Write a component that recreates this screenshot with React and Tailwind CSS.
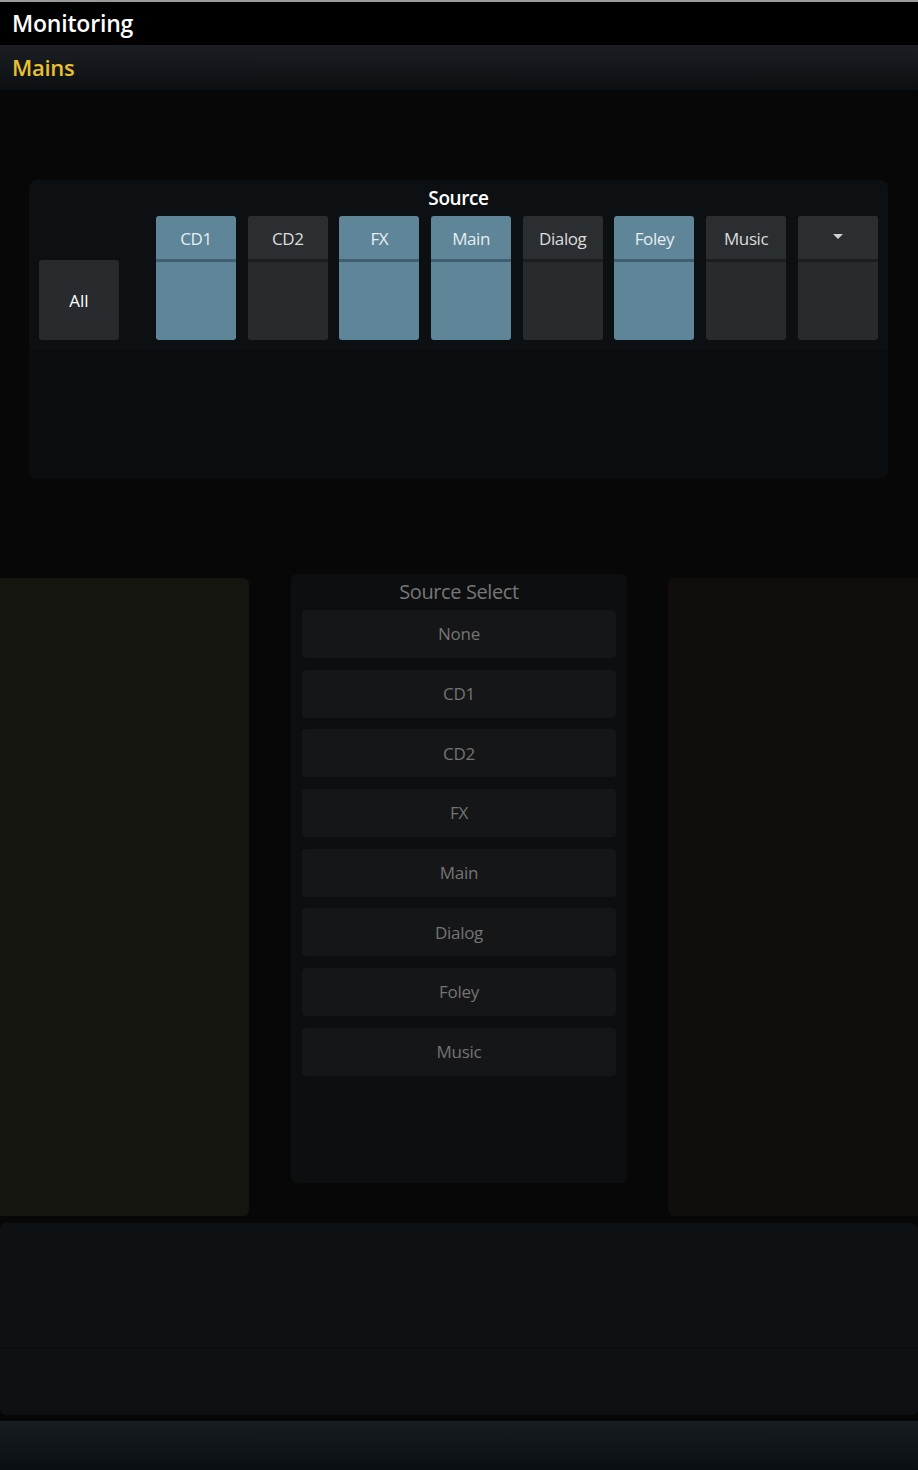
import { useState } from 'react';

const channels = [
    { name: 'CD1', on: true },
    { name: 'CD2', on: false },
    { name: 'FX', on: true },
    { name: 'Main', on: true },
    { name: 'Dialog', on: false },
    { name: 'Foley', on: true },
    { name: 'Music', on: false },
];

const sources = ['None', 'CD1', 'CD2', 'FX', 'Main', 'Dialog', 'Foley', 'Music'];

function ChannelButton({ label, on, onClick, children }) {
    return (
        <button
            onClick={onClick}
            className={`flex flex-col w-[80px] h-[124px] rounded-[3px] overflow-hidden ${on ? 'bg-[#5f8599]' : 'bg-[#272b2e]'}`}
        >
            <div className={`h-[43px] w-full flex items-center justify-center pt-[3px] text-[17px] tracking-[-0.4px] ${on ? 'text-[#e6eef2]' : 'text-[#dcdcdc] bg-[#2a2e31]'}`}>
                {children || label}
            </div>
            <div className={`h-[3px] w-full ${on ? 'bg-[#3f5f70]' : 'bg-[#1b1e21]'}`} />
            <div className="flex-1 w-full" />
        </button>
    );
}

export default function App() {
    const [active, setActive] = useState(channels.map(c => c.on));

    const toggle = (i) => {
        setActive(active.map((v, j) => (j === i ? !v : v)));
    };

    return (
        <div className="w-[918px] h-[1470px] bg-[#070707] flex flex-col overflow-hidden" style={{ fontFamily: '"Open Sans", "Noto Sans", sans-serif' }}>
            <div className="h-[2px] bg-[#9a9a9a]" />

            {/* title bar */}
            <div className="h-[43px] bg-black flex items-center px-3">
                <span className="text-white text-[23px] font-semibold tracking-[-0.2px]">Monitoring</span>
            </div>

            <div className="h-[45px] bg-gradient-to-b from-[#1b1f23] to-[#0c0f12] flex items-center px-3">
                <span className="text-[#e9c12e] text-[22px] font-semibold tracking-[-0.3px]">Mains</span>
            </div>

            {/* source panel */}
            <div className="pt-[90px] pl-[29px] pr-[30px]">
                <div className="h-[299px] bg-[#0d1013] rounded-lg flex flex-col">
                    <div className="h-[36px] flex items-center justify-center text-white text-[19px] font-semibold tracking-[-0.4px]">
                        Source
                    </div>
                    <div className="flex items-end px-[10px]">
                        <button className="w-[80px] h-[80px] bg-[#272b2e] rounded-[3px] text-white text-[17px] pt-[2px] mr-[37px]">
                            All
                        </button>
                        <div className="flex gap-[11.7px]">
                            {channels.map((c, i) => (
                                <ChannelButton key={c.name} label={c.name} on={active[i]} onClick={() => toggle(i)} />
                            ))}
                            <ChannelButton label="">
                                <svg width="10" height="5" viewBox="0 0 10 5" className="mt-[-6px]">
                                    <path d="M0 0h10L5 5z" fill="#d0d0d0" />
                                </svg>
                            </ChannelButton>
                        </div>
                    </div>
                    <div className="mt-[10px] h-px bg-[#080a0c]" />
                    <div className="flex-1 bg-[#0b0e11] rounded-b-lg" />
                </div>
            </div>

            {/* middle row */}
            <div className="mt-[95px] flex items-start">
                <div className="w-[249px] h-[638px] mt-[4px] bg-[#151510] rounded-r-md" />

                <div className="ml-[42px] w-[336px] h-[609px] bg-[#0d0e0f] rounded-md px-[11px] flex flex-col">
                    <div className="h-[36px] flex items-center justify-center text-[#777] text-[20px] tracking-[-0.4px]">
                        Source Select
                    </div>
                    <div className="flex flex-col gap-[11.7px]">
                        {sources.map(s => (
                            <button key={s} className="h-[48px] w-full bg-[#151617] rounded-[4px] text-[#747474] text-[17px] tracking-[-0.3px]">
                                {s}
                            </button>
                        ))}
                    </div>
                </div>

                <div className="ml-[41px] flex-1 h-[638px] mt-[4px] bg-[#110d0d] rounded-l-md" />
            </div>

            {/* bottom panel */}
            <div className="mt-[7px] h-[192px] bg-[#0d1114] rounded-md flex flex-col">
                <div className="h-[124px]" />
                <div className="h-px bg-[#080b0d]" />
                <div className="flex-1" />
            </div>

            <div className="mt-[6px] flex-1 bg-gradient-to-b from-[#171d21] to-[#0a0f14]" />
        </div>
    );
}
